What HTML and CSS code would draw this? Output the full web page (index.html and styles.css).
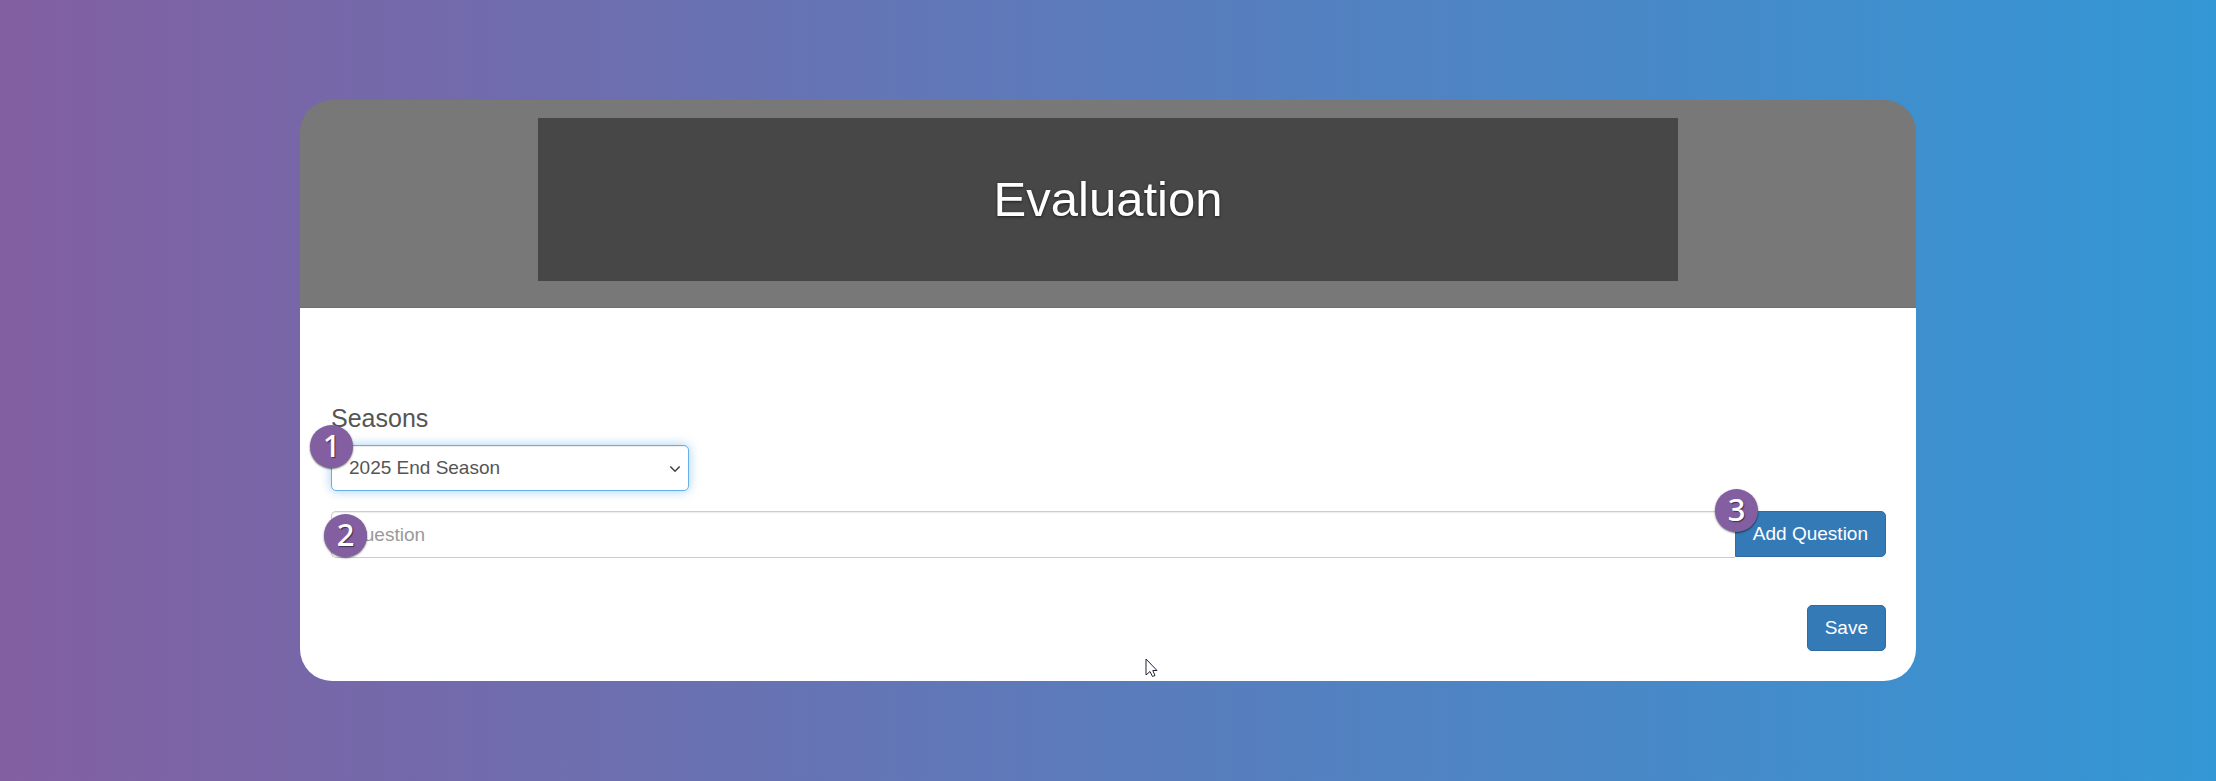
FILE: index.html
```html
<!DOCTYPE html>
<html lang="en">
<head>
<meta charset="utf-8">
<title>Evaluation</title>
<meta name="viewport" content="width=device-width, initial-scale=1">
<link rel="stylesheet" href="styles.css">
</head>
<body>
<main class="card">
  <header class="card-header">
    <h1 class="banner">Evaluation</h1>
  </header>
  <form class="card-body">
    <div class="season">
      <label class="season-label" for="season">Seasons</label>
      <div class="select-wrap">
        <select class="control select" id="season">
          <option>2025 End Season</option>
        </select>
        <svg class="chevron" viewBox="0 0 12 8" aria-hidden="true"><path d="M1.300 1.500 6 6.200l4.700-4.700"/></svg>
        <span class="badge badge-select">1</span>
      </div>
    </div>
    <div class="question">
      <input class="control question-input" type="text" placeholder="Question" aria-label="Question">
      <button class="button button-joined" type="button">Add Question</button>
      <span class="badge badge-input">2</span>
      <span class="badge badge-add">3</span>
    </div>
    <div class="actions">
      <button class="button button-save" type="button">Save</button>
    </div>
  </form>
  <svg class="pointer" viewBox="0 0 13 20" aria-hidden="true"><path d="M1 1v16l4-3.500 2.500 5 2.500-1-2.200-5H12z"/></svg>
</main>
</body>
</html>
```
FILE: styles.css
```css
* {
  box-sizing: border-box;
}

body {
  margin: 0;
  min-height: 100vh;
  padding: 100px 300px;
  background: linear-gradient(90deg, #825fa1, #3497d5);
  color: #555;
  font-family: "Liberation Sans", Arial, sans-serif;
  font-size: 19px;
}

.card {
  position: relative;
}

.card-header {
  display: flex;
  justify-content: center;
  padding: 18px 0 26px;
  border-bottom: 1px solid #6f6f6f;
  border-radius: 32px 32px 0 0;
  background: #787878;
}

.banner {
  width: 70.5%;
  margin: 0;
  padding: 54px 0;
  background: #474747;
  color: #fff;
  font-size: 49px;
  font-weight: 400;
  line-height: 55px;
  text-align: center;
  text-shadow: 0 1px 3px rgba(0, 0, 0, 0.6);
}

.card-body {
  padding: 96px 30px 30px 31px;
  border-radius: 0 0 32px 32px;
  background: #fff;
}

.season-label {
  display: block;
  margin-bottom: 13px;
  font-size: 25px;
  line-height: 28px;
}

.select-wrap {
  position: relative;
  width: 358px;
}

.control {
  display: block;
  width: 100%;
  height: 46px;
  margin: 0;
  padding: 0 17px;
  border: 1px solid #ccc;
  border-radius: 5px;
  outline: none;
  background: #fff;
  color: #555;
  font: inherit;
}

.select {
  padding-bottom: 2px;
  appearance: none;
  border-color: #66afe9;
  box-shadow: inset 0 1px 1px rgba(0, 0, 0, 0.075), 0 0 11px rgba(102, 175, 233, 0.6);
}

.chevron {
  position: absolute;
  top: 20px;
  right: 8px;
  width: 12px;
  height: 8px;
  fill: none;
  stroke: #444;
  stroke-width: 1.6;
  pointer-events: none;
}

.question {
  position: relative;
  display: flex;
  margin-top: 20px;
}

.question-input {
  flex: 1;
  height: 47px;
  border-right: 0;
  border-radius: 5px 0 0 5px;
  box-shadow: inset 0 1px 1px rgba(0, 0, 0, 0.075);
}

.question-input::placeholder {
  color: #999;
  opacity: 1;
}

.button {
  height: 46px;
  margin: 0;
  padding: 0 17px;
  border: 1px solid #2e6da4;
  border-radius: 5px;
  background: #337ab7;
  color: #fff;
  font: inherit;
}

.button-joined {
  border-radius: 0 5px 5px 0;
}

.actions {
  display: flex;
  justify-content: flex-end;
  margin-top: 47px;
}

.badge {
  position: absolute;
  width: 43px;
  height: 43px;
  border-radius: 50%;
  background: #835fa1;
  box-shadow: 0 1px 2px rgba(0, 0, 0, 0.6);
  color: #fff;
  font: 500 31px/41px "Noto Sans", "Open Sans", sans-serif;
  text-align: center;
  text-shadow: 1px 1px 1px rgba(0, 0, 0, 0.5);
}

.badge-select {
  top: -20px;
  left: -21px;
}

.badge-input {
  top: 3px;
  left: -7px;
}

.badge-add {
  top: -22px;
  right: 128px;
}

.pointer {
  position: absolute;
  bottom: 3px;
  left: 845px;
  width: 13px;
  height: 20px;
  fill: #fff;
  stroke: #223;
  stroke-width: 1;
}
```
